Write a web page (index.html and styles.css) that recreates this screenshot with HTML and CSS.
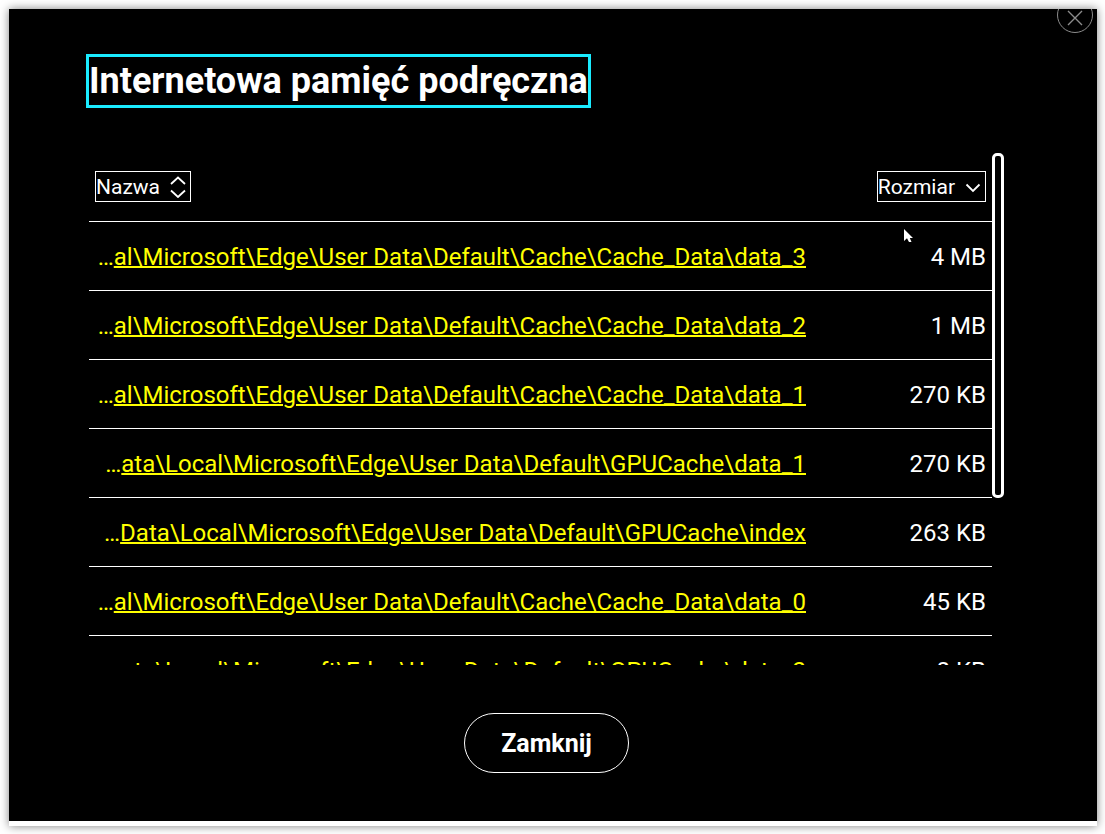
FILE: index.html
```html
<!DOCTYPE html>
<html lang="pl">
<head>
<meta charset="utf-8">
<meta name="viewport" content="width=device-width, initial-scale=1">
<title>Internetowa pamięć podręczna</title>
<link rel="stylesheet" href="styles.css">
</head>
<body>
<main class="dialog" role="dialog" aria-labelledby="dialog-title">
  <button class="dismiss" type="button" aria-label="Zamknij okno">
    <svg width="36" height="36" viewBox="0 0 36 36" fill="none" stroke="currentColor">
      <circle cx="18" cy="18" r="17.5"/>
      <path d="M11 14l14 14M25 14L11 28" stroke-width="1.4"/>
    </svg>
  </button>
  <h1 class="title" id="dialog-title">Internetowa pamięć podręczna</h1>
  <div class="list">
    <div class="viewport">
      <table class="files">
        <thead>
          <tr>
            <th class="name" scope="col">
              <button class="sort" type="button">Nazwa
                <svg width="16" height="22" viewBox="0 0 16 22" fill="none" stroke="currentColor" stroke-width="1.8"><path d="M1 8l7-6.500L15 8M1 14.500l7 6.500 7-6.500"/></svg>
              </button>
            </th>
            <th class="size" scope="col">
              <button class="sort" type="button">Rozmiar
                <svg width="16" height="22" viewBox="0 0 16 22" fill="none" stroke="currentColor" stroke-width="1.8"><path d="M1.500 8.500L8 15l6.500-6.500"/></svg>
              </button>
            </th>
          </tr>
        </thead>
        <tbody>
          <tr><td class="name">…<a href="#">al\Microsoft\Edge\User Data\Default\Cache\Cache_Data\data_3</a></td><td class="size">4 MB</td></tr>
          <tr><td class="name">…<a href="#">al\Microsoft\Edge\User Data\Default\Cache\Cache_Data\data_2</a></td><td class="size">1 MB</td></tr>
          <tr><td class="name">…<a href="#">al\Microsoft\Edge\User Data\Default\Cache\Cache_Data\data_1</a></td><td class="size">270 KB</td></tr>
          <tr><td class="name">…<a href="#">ata\Local\Microsoft\Edge\User Data\Default\GPUCache\data_1</a></td><td class="size">270 KB</td></tr>
          <tr><td class="name">…<a href="#">Data\Local\Microsoft\Edge\User Data\Default\GPUCache\index</a></td><td class="size">263 KB</td></tr>
          <tr><td class="name">…<a href="#">al\Microsoft\Edge\User Data\Default\Cache\Cache_Data\data_0</a></td><td class="size">45 KB</td></tr>
          <tr><td class="name">…<a href="#">ata\Local\Microsoft\Edge\User Data\Default\GPUCache\data_2</a></td><td class="size">8 KB</td></tr>
        </tbody>
      </table>
    </div>
    <div class="track"><div class="thumb"></div></div>
  </div>
  <button class="close" type="button">Zamknij</button>
  <svg class="cursor" width="12" height="16" viewBox="0 0 12 16" aria-hidden="true"><path d="M0 0v12l3-2.800L5 13h2.500L5.800 9H9z" fill="#fff"/></svg>
</main>
</body>
</html>
```
FILE: styles.css
```css
* {
  box-sizing: border-box;
}

body {
  margin: 0;
  min-height: 100vh;
  padding: 9px 8px 8px 9px;
  display: flex;
  background: #fff;
  font-family: Roboto, "Liberation Sans", sans-serif;
}

button {
  padding: 0;
  background: #000;
  color: #fff;
  font-family: inherit;
}

.dialog {
  position: relative;
  flex: 1;
  min-width: 0;
  height: calc(100vh - 17px);
  padding: 48px 93px 48px 80px;
  display: flex;
  flex-direction: column;
  align-items: flex-start;
  gap: 48px;
  overflow: hidden;
  background: #000;
  color: #fff;
  border-bottom: 5px solid #fff;
  box-shadow: 0 0 9px rgba(0, 0, 0, 0.5);
}

.dismiss {
  position: absolute;
  top: -12px;
  right: 4px;
  width: 36px;
  height: 36px;
  border: 0;
  background: none;
  color: #8c8c8c;
}

.dismiss svg {
  display: block;
}

.title {
  margin: 0;
  font-size: 36px;
  line-height: 48px;
  font-weight: 700;
  outline: 3px solid #1aebff;
}

.list {
  align-self: stretch;
  flex: 1;
  min-height: 0;
  display: flex;
}

.viewport {
  flex: 1;
  min-width: 0;
  overflow: hidden;
}

.track {
  width: 12px;
}

.thumb {
  height: 345px;
  border: 3px solid #fff;
  border-radius: 5px;
}

.files {
  width: 100%;
  table-layout: fixed;
  border-spacing: 0;
  font-size: 24px;
  line-height: 32px;
}

.files th,
.files td {
  height: 69px;
  padding: 2px 0 0;
  border-bottom: 1px solid #fff;
  font-weight: 400;
  white-space: nowrap;
  text-align: right;
}

.files th {
  padding: 0 0 3px;
}

.files th.name {
  padding-left: 6px;
  text-align: left;
}

.files td.name,
.files a {
  color: #ff0;
}

.files a {
  text-decoration-thickness: 2px;
}

.files .size {
  width: 186px;
  padding-right: 6px;
}

.sort {
  display: inline-flex;
  align-items: center;
  gap: 10px;
  height: 31px;
  padding: 0 4px 0 0;
  border: 1px solid #fff;
  font-size: 21px;
  vertical-align: middle;
}

.close {
  align-self: center;
  height: 60px;
  padding: 0 36px;
  border: 1px solid #fff;
  border-radius: 30px;
  font-size: 25px;
  font-weight: 700;
}

.cursor {
  position: absolute;
  left: 895px;
  top: 220px;
}
```
